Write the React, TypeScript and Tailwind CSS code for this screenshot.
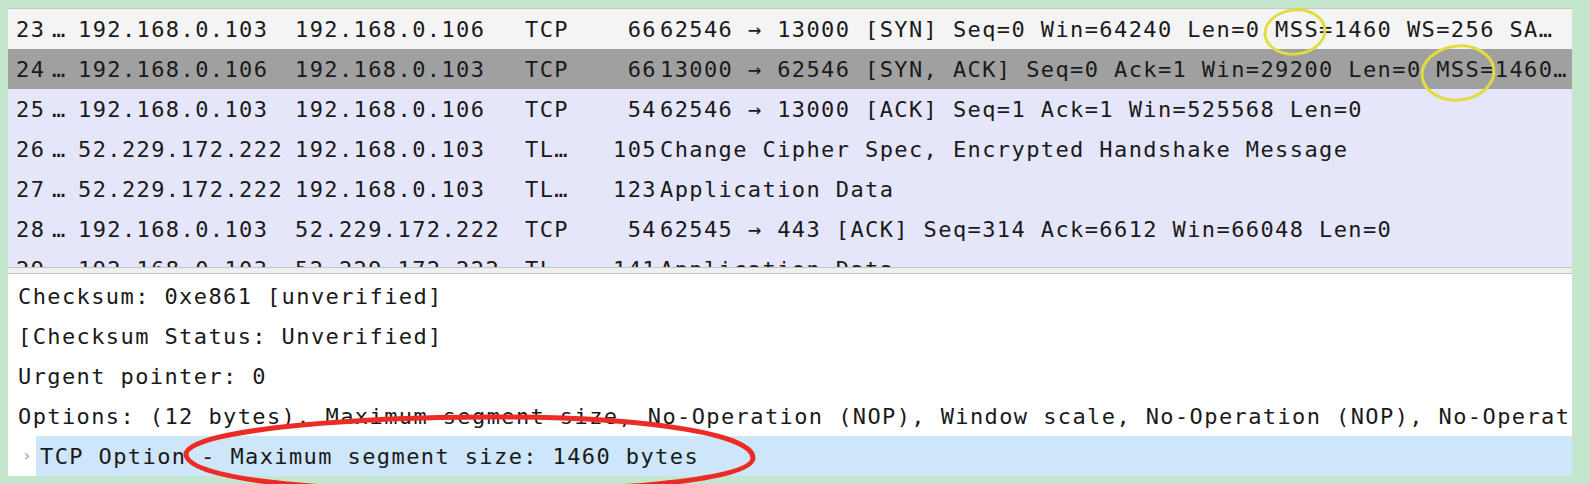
import React from 'react';

type Packet = {
  no: string;
  src: string;
  dst: string;
  proto: string;
  len: string;
  info: string;
  bg: string;
};

const packets: Packet[] = [
  { no: '23', src: '192.168.0.103', dst: '192.168.0.106', proto: 'TCP', len: '66', info: '62546 → 13000 [SYN] Seq=0 Win=64240 Len=0 MSS=1460 WS=256 SA…', bg: 'bg-[#f4f4f4]' },
  { no: '24', src: '192.168.0.106', dst: '192.168.0.103', proto: 'TCP', len: '66', info: '13000 → 62546 [SYN, ACK] Seq=0 Ack=1 Win=29200 Len=0 MSS=1460…', bg: 'bg-[#a0a0a0]' },
  { no: '25', src: '192.168.0.103', dst: '192.168.0.106', proto: 'TCP', len: '54', info: '62546 → 13000 [ACK] Seq=1 Ack=1 Win=525568 Len=0', bg: 'bg-[#e6e6fb]' },
  { no: '26', src: '52.229.172.222', dst: '192.168.0.103', proto: 'TL…', len: '105', info: 'Change Cipher Spec, Encrypted Handshake Message', bg: 'bg-[#e6e6fb]' },
  { no: '27', src: '52.229.172.222', dst: '192.168.0.103', proto: 'TL…', len: '123', info: 'Application Data', bg: 'bg-[#e6e6fb]' },
  { no: '28', src: '192.168.0.103', dst: '52.229.172.222', proto: 'TCP', len: '54', info: '62545 → 443 [ACK] Seq=314 Ack=6612 Win=66048 Len=0', bg: 'bg-[#e6e6fb]' },
  { no: '29', src: '192.168.0.103', dst: '52.229.172.222', proto: 'TL…', len: '141', info: 'Application Data', bg: 'bg-[#e6e6fb]' },
];

const details = [
  'Checksum: 0xe861 [unverified]',
  '[Checksum Status: Unverified]',
  'Urgent pointer: 0',
  'Options: (12 bytes), Maximum segment size, No-Operation (NOP), Window scale, No-Operation (NOP), No-Operation (NOP), SACK permitted',
];

function PacketRow({ p }: { p: Packet }) {
  return (
    <div className={`flex items-center h-10 whitespace-nowrap overflow-hidden ${p.bg}`}>
      <div className="w-[44px] shrink-0 pl-2">{p.no}</div>
      <div className="w-[26px] shrink-0">…</div>
      <div className="w-[217px] shrink-0">{p.src}</div>
      <div className="w-[230px] shrink-0">{p.dst}</div>
      <div className="w-[73px] shrink-0">{p.proto}</div>
      <div className="w-[62px] shrink-0 text-right pr-[3px]">{p.len}</div>
      <div className="flex-1 overflow-hidden">{p.info}</div>
    </div>
  );
}

// annotations drawn over the capture
function Marks() {
  return (
    <svg
      className="absolute left-0 top-0 pointer-events-none"
      width={1590}
      height={484}
      viewBox="0 0 1590 484"
      fill="none"
    >
      <ellipse cx={1295} cy={32} rx={30} ry={22} transform="rotate(-6 1295 32)" stroke="#e2dd3e" strokeWidth={3} />
      <ellipse cx={1458} cy={73} rx={36} ry={27} transform="rotate(-6 1458 73)" stroke="#e2dd3e" strokeWidth={3} />
      <path
        d="M186 453 C 196 428, 370 416, 510 417 C 660 418, 754 436, 753 458 C 752 482, 600 492, 450 491 C 300 490, 184 478, 186 453 Z"
        stroke="#ec2b25"
        strokeWidth={5}
      />
    </svg>
  );
}

export default function App() {
  return (
    <div className="relative w-[1590px] h-[484px] overflow-hidden bg-[#c4e6cc] pt-2 pl-2 pr-[18px] pb-2 font-['DejaVu_Sans_Mono',monospace] text-[22px] tracking-[1.4px] text-[#1a1a1a]">
      <div className="h-[468px] flex flex-col border-t border-[#c6c6c6] bg-white">
        {/* packet list */}
        <div className="h-[258px] shrink-0 overflow-hidden bg-[#e6e6fb]">
          {packets.map((p) => (
            <PacketRow key={p.no} p={p} />
          ))}
        </div>

        {/* splitter */}
        <div className="h-[7px] shrink-0 border-y border-[#c4c4c4] bg-[#efefef]"></div>

        {/* packet details */}
        <div className="flex-1 pt-[2px] overflow-hidden">
          {details.map((d) => (
            <div key={d} className="h-10 flex items-center pl-[10px] whitespace-nowrap overflow-hidden">
              {d}
            </div>
          ))}
          <div className="h-10 flex items-stretch whitespace-nowrap overflow-hidden">
            <div className="w-[28px] shrink-0 pl-[14px] flex items-center text-[16px] text-[#a3a3a3]">›</div>
            <div className="flex-1 flex items-center pl-1 bg-[#cde6fa]">
              TCP Option - Maximum segment size: 1460 bytes
            </div>
          </div>
        </div>
      </div>
      <Marks />
    </div>
  );
}
